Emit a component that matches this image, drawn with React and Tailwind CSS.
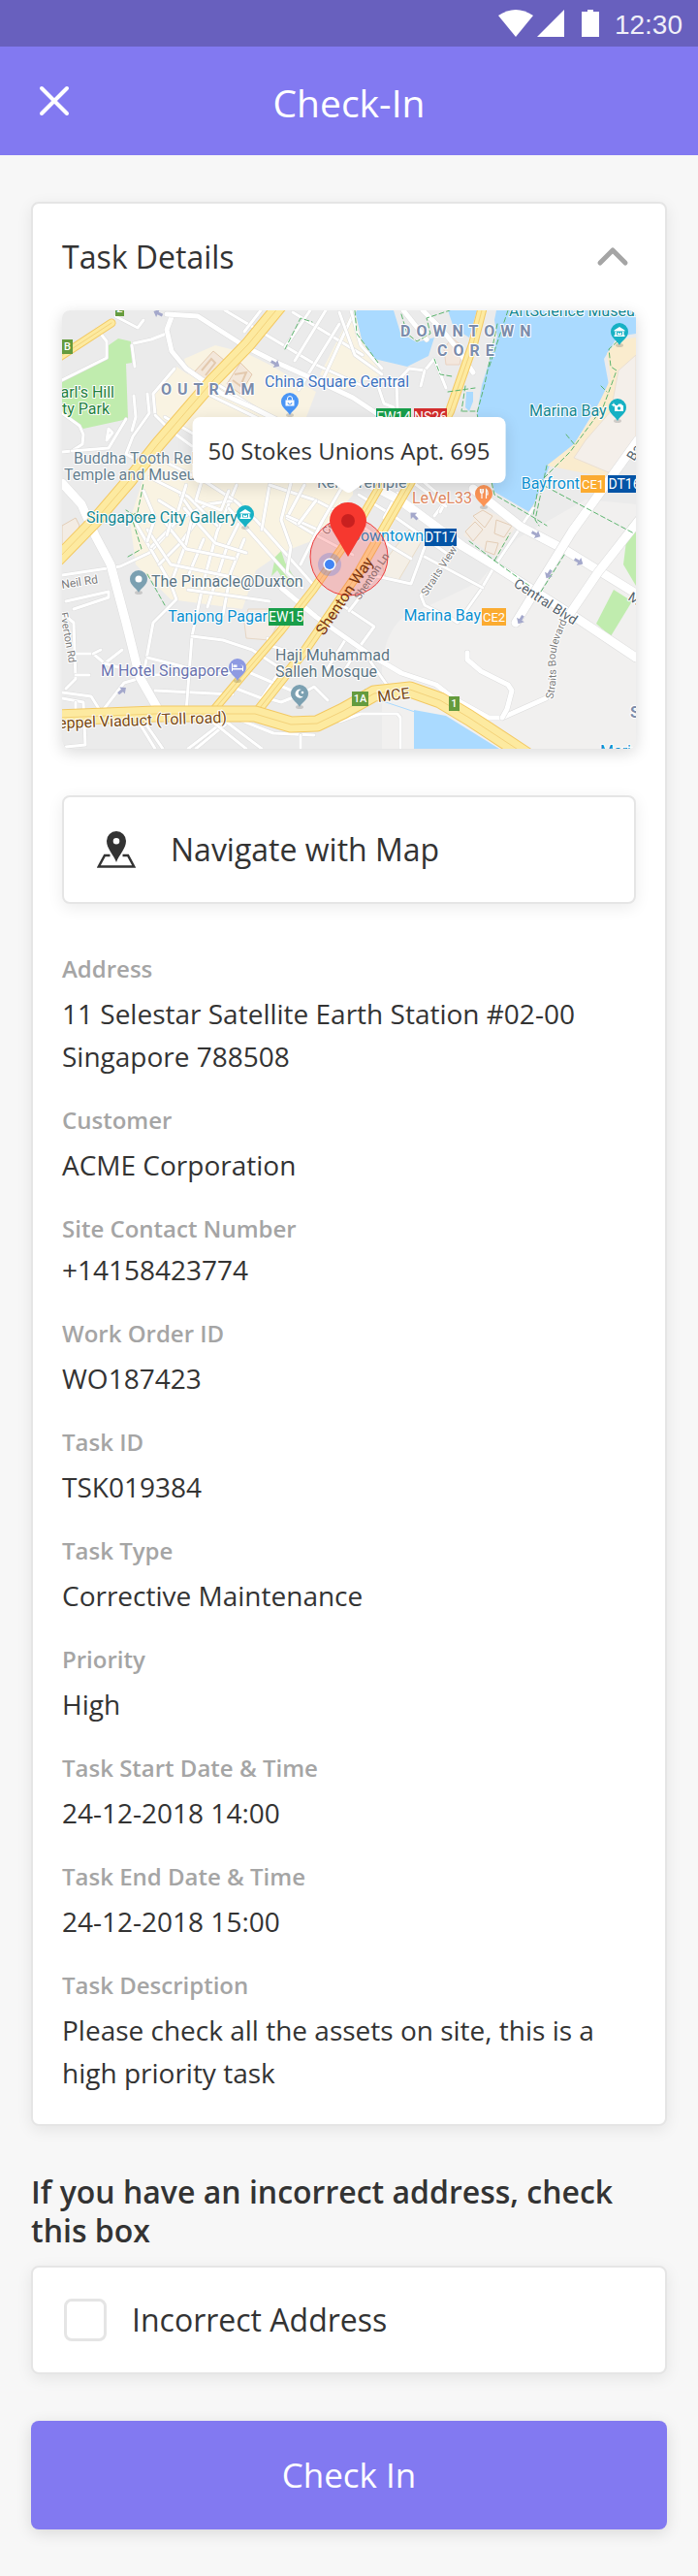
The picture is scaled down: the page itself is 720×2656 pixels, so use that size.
import React, { useState } from 'react';

const details = [
  { label: 'Address', value: '11 Selestar Satellite Earth Station #02-00 Singapore 788508' },
  { label: 'Customer', value: 'ACME Corporation' },
  { label: 'Site Contact Number', value: '+14158423774', phone: true },
  { label: 'Work Order ID', value: 'WO187423' },
  { label: 'Task ID', value: 'TSK019384' },
  { label: 'Task Type', value: 'Corrective Maintenance' },
  { label: 'Priority', value: 'High' },
  { label: 'Task Start Date & Time', value: '24-12-2018 14:00' },
  { label: 'Task End Date & Time', value: '24-12-2018 15:00' },
  { label: 'Task Description', value: 'Please check all the assets on site, this is a high priority task' },
];

// Minor streets, drawn thin
const streets = [
  'M0 72L46 49V32L36 19',
  'M55 6L78 18L84 10',
  'M74 34L92 30L110 23',
  'M72 36L75 58',
  'M0 106L18 119L22 128L21 138L10 145L0 146',
  'M10 145L48 142L66 112',
  'M46 134L52 126L48 122L46 134',
  'M88 86L90 106L73 130L66 148L80 156',
  'M74 88L76 110L72 124',
  'M96 108L94 86L116 60',
  'M96 108L112 124L134 140',
  'M106 110L140 130',
  'M168 0L262 56L310 78',
  'M205 0L188 22',
  'M238 2L310 46',
  'M256 0L230 38',
  'M272 0L240 52',
  'M286 14L244 82',
  'M302 0L266 78',
  'M286 2L302 46L330 66',
  'M298 0L308 36L330 60',
  'M310 70L345 74L358 60L374 62L384 50L396 80',
  'M345 74L346 100',
  'M326 78L332 96L342 100L342 112',
  'M374 62L370 78',
  'M146 84L240 130',
  'M160 76L214 110',
  'M0 273L60 264L90 250L116 222',
  'M4 300L48 290V296L12 308',
  'M0 312L12 322L14 380L4 390',
  'M14 354L32 354L44 364L62 350',
  'M14 376L28 376',
  'M32 354L40 350',
  'M44 364L58 368',
  'M0 394L30 398L40 414',
  'M0 400L22 404L24 448L4 450',
  'M14 404L14 420',
  'M40 415L64 384L92 376',
  'M92 376L174 374',
  'M96 392L176 396',
  'M128 414L134 336L146 280L160 228L180 180',
  'M84 376L94 322L118 298L112 282L88 240L74 216',
  'M134 336L166 340L196 350L236 376',
  'M88 358L120 366L134 370',
  'M92 244L120 216L150 200L178 196',
  'M100 262L122 240L140 216L122 190',
  'M112 282L128 240L134 214',
  'M130 274L146 236',
  'M150 306L170 244L182 220',
  'M166 314L174 270L188 236',
  'M130 288L214 300',
  'M88 226L112 262L180 276',
  'M104 216L128 246L178 256',
  'M126 204L158 240L190 250',
  'M90 172L130 192L160 222',
  'M110 158L150 178L184 200',
  'M100 196L116 206L108 232',
  'M128 180L120 206',
  'M144 176L138 196L164 206L172 186',
  'M84 186L96 214L88 238',
  'M178 196L200 216L230 250L262 286',
  'M172 204L204 240L236 276',
  'M214 180L206 226',
  'M214 180L262 196L300 216',
  'M236 178L226 216L236 244L232 270L248 286',
  'M250 180L232 214L262 232L300 252',
  'M232 212L268 228',
  'M262 196L244 220',
  'M290 180L268 218L246 262',
  'M306 190L342 212L396 250',
  'M300 216L340 244L360 256',
  'M346 188L332 214',
  'M372 176L396 196L384 212',
  'M396 196L390 208',
  'M360 176L396 202',
  'M286 302L322 326L306 348L292 370',
  'M296 310L324 274L360 282L374 244',
  'M324 236L312 264',
  'M180 390L206 400L222 376',
  'M190 372L246 396L260 388L274 402',
  'M212 338L216 346L234 352',
  'M246 396L226 404L212 400',
  'M272 372L292 340',
  'M318 362L342 396',
  'M286 424L308 416L346 416L349 420V452',
  'M130 452L164 426',
  'M138 452L172 424',
  'M150 420L190 452',
  'M164 420L206 452',
  'M80 426L96 452',
  'M86 426L104 452',
  'M178 420L218 436L260 438',
  'M246 438V452',
  'M404 246L370 294L374 304L402 318L408 322L432 288L446 264L486 204',
  'M374 254L434 286',
];

const avenues = [
  'M114 4L108 20L113 42L128 60L145 72L165 86L196 100L240 122',
  'M108 4L140 6L190 38L222 54L262 72L300 90L345 120',
  'M226 286L262 316L316 354L350 374L386 386L404 400L440 420H454L499 400',
  'M418 353V360L432 372L460 386L464 392L459 411L454 420',
  'M372 0L392 20L408 40L424 64',
  'M352 0L376 30',
];

const boulevards = [
  'M0 178L20 200L34 232L50 262L66 322L80 378L104 420',
  'M300 170L349 196L413 243L446 263L526 314L592 358',
  'M424 184L473 223L519 247L592 292',
  'M594 134L526 228L468 322',
  'M600 210L553 270L519 320',
];

const yellowRoads = [
  { d: 'M224 -4L192 35L156 72L99 138L69 176L33 218L-4 256', w: 15 },
  { d: 'M434 -4L424 35L400 104L359 178L306 270L251 350L200 415', w: 10 },
  { d: 'M338 164L302 226L259 288L226 330L190 372L154 415', w: 9 },
  { d: 'M-4 49L51 13', w: 9 },
  { d: 'M-4 420L96 416L199 416L236 427L263 426L290 413L322 395L359 391L390 402L420 420L478 458', w: 17 },
];

const greenTrails = [
  'M230 40L246 8L258 12',
  'M64 216L78 208L84 178',
  'M82 216L66 206',
  'M68 254L82 246L72 214',
  'M88 272L106 304',
  'M302 0L304 24L326 54',
  'M350 4L356 24L366 32L380 24L376 8L400 0',
  'M384 50L390 66L402 68',
  'M449 14L436 76L428 106L432 128L446 190L484 212L500 222',
  'M413 104L427 104',
  'M416 78L412 104',
  'M398 84L426 80',
  'M460 0L440 60',
  'M573 32L564 40L566 58L572 62L564 84L558 100L524 146L492 178L486 212',
  'M556 78L562 84',
  'M520 128L530 140',
  'M492 178L590 230',
  'M500 160L488 216L492 222',
  'M420 238L446 258L482 284',
  'M518 252L494 290',
  'M446 258L462 230',
];

function Street({ d, width = 3 }) {
  return (
    <>
      <path d={d} stroke="#dcdcdc" strokeWidth={width + 1} />
      <path d={d} stroke="#ffffff" strokeWidth={width} />
    </>
  );
}

function PlacePin({ x, y, color, children }) {
  return (
    <g transform={`translate(${x} ${y})`}>
      <ellipse cx="0" cy="14" rx="4" ry="2" fill="#000" opacity="0.15" />
      <path d="M0 14C-1.500 9.500 -9 7 -9 0A9 9 0 1 1 9 0C9 7 1.500 9.500 0 14Z" fill={color} />
      {children}
    </g>
  );
}

function Museum() {
  return <path d="M-5.500 -1.500L0 -5L5.500 -1.500V-.5H-5.500ZM-4.500 0H-3V4H-4.500ZM3 0H4.500V4H3ZM-5.500 3.500H5.500V5H-5.500ZM-2 3V.5L0 2L2 .5V3Z" fill="#fff" />;
}

function Badge({ x, y, w, h = 18, color, size = 14, children }) {
  return (
    <g>
      <rect x={x} y={y} width={w} height={h} fill={color} />
      <text x={x + w / 2} y={y + h / 2 + size * 0.36} fontSize={size} textAnchor="middle" fill="#fff">
        {children}
      </text>
    </g>
  );
}

function Label({ color, size = 16, children, ...rest }) {
  return (
    <text fill={color} fontSize={size} stroke="#fff" strokeWidth="2" strokeLinejoin="round" paintOrder="stroke" {...rest}>
      {children}
    </text>
  );
}

function Arrow({ x, y, angle }) {
  return <path transform={`translate(${x} ${y}) rotate(${angle})`} d="M-5 -1.500H0V-4.500L5 0L0 4.500V1.500H-5Z" fill="#a4a8cb" />;
}

function CityMap() {
  return (
    <svg
      viewBox="0 0 592 452"
      role="img"
      aria-label="Map"
      className="block w-full rounded-lg font-['Roboto',sans-serif] shadow-[0_4px_16px_rgba(0,0,0,0.15)]"
    >
      <rect width="592" height="452" fill="#ebebeb" />

      {/* land */}
      <path d="M592 200V452H330V370Q332 335 350 318L430 280L470 235L540 195Z" fill="#f1f0ef" />
      <path d="M94 108L95 86L118 58L130 66L126 50L158 36L190 44L214 56L262 84L252 110L130 126Z" fill="#f9f3e2" />
      <path d="M266 66L300 0L312 0L322 54L330 66L290 82Z" fill="#f9f3e2" />
      <path d="M88 160L140 150H300V190L262 236L226 250L200 268L186 308L112 298L76 262L70 216Z" fill="#f9f3e2" />
      <path d="M136 64L156 42L168 52L148 76ZM170 76L184 54L196 66L184 86Z" fill="#f3e7da" stroke="#e3c9ae" />
      <path d="M144 62L154 50L158 54L148 67M178 66L190 64L184 78L176 72" fill="none" stroke="#e3c9ae" strokeWidth="2" />
      <path d="M188 322L192 308H230L214 340L190 338Z" fill="#f3ece5" stroke="#e6d6c5" />
      <path d="M414 232L432 204L470 220L448 254Z" fill="#f3ece4" />
      <path d="M424 212L434 206L444 212L436 224ZM416 228L426 218L434 226L424 238ZM448 216L464 222L456 234L446 230ZM438 238L450 240L446 252L436 248Z" fill="#f3ece4" stroke="#e3cdb6" />
      <path d="M330 262L358 226L372 236L346 280L334 276Z" fill="#f4efe6" stroke="#e9dcc8" />
      <path d="M394 40L402 28L414 38L410 56L396 56Z" fill="#f3e7dd" stroke="#ead3c2" />
      <path d="M0 222L14 214L18 222L14 232L0 242Z" fill="#f3ece4" stroke="#e3cdb6" />

      {/* parks */}
      <path d="M0 72L30 57L46 48L48 36L58 29L71 32L72 54L66 55L68 112L22 122L0 104Z" fill="#c0ecae" />
      <path d="M226 248L230 260L240 276L232 284L222 268L216 274L220 254Z" fill="#c0ecae" />
      <path d="M569 288L588 300L566 336L551 323Z" fill="#c0ecae" />
      <path d="M592 214L584 222L579 262L592 284Z" fill="#c0ecae" />

      {/* water */}
      <path d="M448 0L446 10L449 27L433 77L428 107L432 123L446 187L482 208L488 197L503 160L529 137L553 97L564 77L559 50L573 27L592 24V0Z" fill="#aadaff" />
      <path d="M302 0L309 30L322 50L356 58L378 47L384 28L366 33L349 23L342 0Z" fill="#aadaff" />
      <path d="M398 0H428L420 28L404 18Z" fill="#aadaff" />
      <path d="M417 84L424 84V94L420 104L416 100Z" fill="#aadaff" />
      <path d="M363 412L396 418L451 452H363Z" fill="#aadaff" />
      <path d="M312 390L322 400L364 414" fill="none" stroke="#aadaff" />
      <path d="M592 28L576 30L562 44L566 70L550 104L528 138L500 160L560 172L592 130Z" fill="#faecce" />
      <path d="M592 46L574 62L566 104L540 134L528 152L566 168L592 134Z" fill="#f4efea" stroke="#eadfd2" />

      {/* roads */}
      <g fill="none" strokeLinejoin="round" strokeLinecap="round">
        {streets.map((d) => (
          <Street key={d} d={d} />
        ))}
        {avenues.map((d) => (
          <Street key={d} d={d} width={5} />
        ))}
        {boulevards.map((d) => (
          <Street key={d} d={d} width={9} />
        ))}
        {yellowRoads.map((road) => (
          <g key={road.d}>
            <path d={road.d} stroke="#f3c963" strokeWidth={road.w} />
            <path d={road.d} stroke="#fdeaa0" strokeWidth={road.w - 2} />
            <path d={road.d} stroke="#f3d27b" strokeWidth="1" />
          </g>
        ))}
        <g stroke="#5db56f" strokeWidth="1" strokeDasharray="5 3">
          {greenTrails.map((d) => (
            <path key={d} d={d} />
          ))}
        </g>
      </g>

      <Arrow x={99} y={3} angle={205} />
      <Arrow x={220} y={55} angle={30} />
      <Arrow x={363} y={212} angle={225} />
      <Arrow x={489} y={231} angle={28} />
      <Arrow x={533} y={259} angle={30} />
      <Arrow x={502} y={272} angle={120} />
      <Arrow x={473} y={319} angle={120} />
      <Arrow x={62} y={392} angle={-38} />

      {/* districts */}
      <g fontWeight="700">
        <Label x={102} y={87} color="#7b8cab" className="tracking-[6px]">OUTRAM</Label>
        <Label x={349} y={27} color="#7b8cab" className="tracking-[6px]">DOWNTOWN</Label>
        <Label x={387} y={47} color="#7b8cab" className="tracking-[6px]">CORE</Label>
        <Label x={586} y={420} color="#7b8cab">S</Label>
      </g>

      {/* places */}
      <Label x={54} y={90} textAnchor="end" color="#1f8040">Pearl's Hill</Label>
      <Label x={49} y={107} textAnchor="end" color="#1f8040">City Park</Label>
      <Label x={209} y={79} color="#3f74bf">China Square Central</Label>
      <Label x={12} y={158} color="#66808f">Buddha Tooth Relic</Label>
      <Label x={2} y={175} color="#66808f">Temple and Museum</Label>
      <Label x={25} y={219} color="#128792">Singapore City Gallery</Label>
      <Label x={461} y={6} color="#128792">ArtScience Museum</Label>
      <Label x={482} y={109} color="#128792">Marina Bay</Label>
      <Label x={263} y={183} color="#66808f">Keng Temple</Label>
      <Label x={361} y={199} color="#de8760">LeVeL33</Label>
      <Label x={92} y={285} color="#5b7482">The Pinnacle@Duxton</Label>
      <Label x={40} y={377} color="#6972ae">M Hotel Singapore</Label>
      <Label x={220} y={361} color="#5b7482">Haji Muhammad</Label>
      <Label x={220} y={378} color="#5b7482">Salleh Mosque</Label>

      {/* stations */}
      <Label x={212} y={321} textAnchor="end" color="#0a8fd0">Tanjong Pagar</Label>
      <Label x={373} y={238} textAnchor="end" color="#0a8fd0">Downtown</Label>
      <Label x={432} y={320} textAnchor="end" color="#0a8fd0">Marina Bay</Label>
      <Label x={534} y={184} textAnchor="end" color="#0a8fd0">Bayfront</Label>
      <Label x={555} y={460} color="#0a8fd0">Marina</Label>
      <Badge x={324} y={101} w={36} color="#189e4a">EW14</Badge>
      <Badge x={363} y={101} w={34} color="#d42e2e">NS26</Badge>
      <Badge x={213} y={307} w={36} color="#189e4a">EW15</Badge>
      <Badge x={374} y={225} w={33} color="#0354a6">DT17</Badge>
      <Badge x={535} y={170} w={25} size={13} color="#fbab30">CE1</Badge>
      <Badge x={563} y={170} w={34} color="#0354a6">DT16</Badge>
      <Badge x={433} y={307} w={25} size={13} color="#fbab30">CE2</Badge>
      <g fontWeight="500">
        <Badge x={0} y={30} w={11} h={15} size={11} color="#659b3d">B</Badge>
        <Badge x={55} y={-9} w={9} h={15} size={11} color="#659b3d">2</Badge>
        <Badge x={299} y={393} w={17} h={15} size={11} color="#659b3d">1A</Badge>
        <Badge x={399} y={398} w={11} h={15} size={11} color="#659b3d">1</Badge>
      </g>

      {/* road names */}
      <Label transform="translate(170 425) rotate(-2)" textAnchor="end" color="#7a4a12">Keppel Viaduct (Toll road)</Label>
      <Label transform="translate(326 404) rotate(-7)" color="#7a4a12">MCE</Label>
      <Label transform="translate(0 287) rotate(-9)" size={12} color="#7b7b7b">Neil Rd</Label>
      <Label transform="translate(-2 312) rotate(80)" size={11} color="#7b7b7b">Everton Rd</Label>
      <Label transform="translate(274 232) rotate(-56)" size={11} color="#7b7b7b">Cecil St</Label>
      <Label transform="translate(376 295) rotate(-57)" size={11} color="#7b7b7b">Straits View</Label>
      <Label transform="translate(465 284) rotate(33)" size={14} color="#54616a">Central Blvd</Label>
      <Label transform="translate(583 298) rotate(32)" size={14} color="#54616a">Marina Blvd</Label>
      <Label transform="translate(590 156) rotate(-58)" size={14} color="#54616a">Bayfront Ave</Label>
      <path id="straits" d="M506 401Q511 384 509 362Q508 346 524 314" fill="none" />
      <Label size={11} color="#7b7b7b">
        <textPath href="#straits">Straits Boulevard</textPath>
      </Label>

      {/* place pins */}
      <PlacePin x={235} y={94} color="#4a95f5">
        <path d="M-4.500 -1.500H4.500V4.500H-4.500Z" fill="#fff" />
        <path d="M-2.500 -1.500V-3A2.500 2.500 0 0 1 2.500 -3V-1.500" fill="none" stroke="#fff" />
        <path d="M-2 1A2 2 0 0 0 2 1" fill="none" stroke="#4a95f5" />
      </PlacePin>
      <PlacePin x={189} y={210} color="#17b1c4"><Museum /></PlacePin>
      <PlacePin x={575} y={22} color="#17b1c4"><Museum /></PlacePin>
      <PlacePin x={573} y={100} color="#17b1c4">
        <path d="M-3 -2H0L1 -3.500H4L5 -2H6V4H-3Z" fill="#fff" />
        <circle cx="1.500" cy="1" r="1.700" fill="#17b1c4" />
        <path d="M-4 -5L-3.300 -3.300L-1.500 -2.500L-3.300 -1.700L-4 0L-4.700 -1.700L-6.500 -2.500L-4.700 -3.300Z" fill="#fff" />
      </PlacePin>
      <PlacePin x={435} y={189} color="#fb9456">
        <path d="M-3.500 -5V-2A1.500 1.500 0 0 0 -.5 -2V-5M-2 -5V5M2.500 5V-4.500Q4.500 -3 4 1H2.500" fill="none" stroke="#fff" strokeWidth="1.200" />
      </PlacePin>
      <PlacePin x={79} y={277} color="#7ba0b1"><circle r="3.500" fill="#fff" /></PlacePin>
      <PlacePin x={181} y={368} color="#8e9ae2">
        <path d="M-6 -4H-5V1H5V-1Q5 -2.500 3 -2.500H-.5V0H-4.500V-2.500H-1V-2.500H4Q6 -2.500 6 0V4H5V2.500H-5V4H-6Z" fill="#fff" />
      </PlacePin>
      <PlacePin x={245} y={395} color="#7ba0b1">
        <path d="M2 -4A4.500 4.500 0 1 0 4 2.500A3.500 3.500 0 1 1 2 -4Z" fill="#fff" />
        <circle cx="3" cy="-1" r="1.300" fill="#fff" />
      </PlacePin>

      {/* current position and task location */}
      <circle cx="296" cy="254" r="40" fill="#ff3b3b" fillOpacity="0.25" stroke="#ee3a3a" />
      <Label transform="translate(307 299) rotate(-56)" size={11} color="#8b6a6a" strokeOpacity="0">Shenton Ln</Label>
      <text transform="translate(270 336) rotate(-56)" fontSize="16" fill="#7a3410">Shenton Way</text>
      <circle cx="276" cy="262" r="12" fill="#5a7be0" fillOpacity="0.3" />
      <circle cx="276" cy="262" r="6.500" fill="#fff" />
      <circle cx="276" cy="262" r="5" fill="#4285f4" />
      <path d="M295 254L279 227Q276 222 276 217A19 19 0 0 1 314 217Q314 222 311 227Z" fill="#f6382f" />
      <circle cx="295" cy="217" r="7" fill="#c9201f" />
    </svg>
  );
}

function StatusBar() {
  return (
    <div className="flex h-12 items-center justify-end bg-[#6860be] pr-4 text-white">
      <svg viewBox="0 0 104 28" className="h-7 w-[104px] fill-current" aria-hidden="true">
        <path d="M0 6Q18 -6 36 6L18 28Z" />
        <path d="M68 0V28H40Z" />
        <path d="M86 2H92V0H98V2H104V28H86Z" />
      </svg>
      <span className="pt-1 pl-4 font-['Liberation_Sans',sans-serif] text-[28px] leading-8 opacity-90">12:30</span>
    </div>
  );
}

const App = () => {
  const [open, setOpen] = useState(true);
  const [incorrect, setIncorrect] = useState(false);

  return (
    <div className="min-h-screen bg-[#f7f7f7] pb-12 font-['Open_Sans',sans-serif] text-[#333333]">
      <StatusBar />
      <header className="grid h-28 grid-cols-[1fr_auto_1fr] items-center bg-[#8279f1] px-10 text-white">
        <button type="button" aria-label="Close" className="justify-self-start">
          <svg viewBox="0 0 32 32" className="size-8" aria-hidden="true">
            <path d="M3 3L29 29M29 3L3 29" stroke="currentColor" strokeWidth="4" strokeLinecap="round" />
          </svg>
        </button>
        <h1 className="pt-1 text-[39px] leading-[56px]">Check-In</h1>
      </header>

      <main className="px-8 pt-12">
        <section className="rounded-lg border-2 border-[#e5e5e5] bg-white px-[30px] pb-[31px] shadow-[0_4px_16px_rgba(0,0,0,0.08)]">
          <h2>
            <button
              type="button"
              aria-expanded={open}
              onClick={() => setOpen(!open)}
              className="flex h-[110px] w-full items-center justify-between pr-1 text-[32px]"
            >
              Task Details
              <svg viewBox="0 0 40 24" className="h-6 w-10" aria-hidden="true">
                <path d="M7 18L20 5L33 18" fill="none" stroke="#a5a5a5" strokeWidth="5" strokeLinecap="round" strokeLinejoin="round" />
              </svg>
            </button>
          </h2>

          {open && (
            <>
              <div className="relative">
                <CityMap />
                <div className="absolute top-[110px] left-1/2 -translate-x-1/2 rounded-lg bg-white px-4 pt-[17px] pb-[15px] text-2xl leading-9 whitespace-nowrap shadow-[0_4px_16px_rgba(0,0,0,0.12)]">
                  50 Stokes Unions Apt. 695
                  <svg viewBox="0 0 32 10" className="absolute top-full left-1/2 h-2.5 w-8 -translate-x-1/2 fill-white" aria-hidden="true">
                    <path d="M0 0H32L19 9Q16 11 13 9Z" />
                  </svg>
                </div>
              </div>

              <button
                type="button"
                className="mt-12 flex h-28 w-full items-center gap-9 rounded-lg border-2 border-[#e5e5e5] bg-white px-[34px] text-[32px] shadow-[0_4px_16px_rgba(0,0,0,0.08)]"
              >
                <svg viewBox="0 0 40 38" className="h-[38px] w-10" aria-hidden="true">
                  <path
                    d="M20 0A10 10 0 0 0 10 10C10 18 17 24 20 32C23 24 30 18 30 10A10 10 0 0 0 20 0ZM20 7A3.300 3.300 0 1 1 20 13.600A3.300 3.300 0 0 1 20 7Z"
                    fill="#333333"
                  />
                  <path d="M13.500 25H8L1.800 36.500H38.200L32 25H26.500" fill="none" stroke="#333333" strokeWidth="2.500" />
                </svg>
                <span>Navigate with Map</span>
              </button>

              <dl className="mt-[51px] flex flex-col gap-7">
                {details.map((item) => (
                  <div key={item.label} className={item.phone ? 'flex flex-col gap-1' : 'flex flex-col gap-2'}>
                    <dt className="text-2xl leading-8 font-semibold text-[#a5a5a5]">{item.label}</dt>
                    <dd className="text-[28px] leading-11">
                      {item.phone ? <a href={`tel:${item.value}`}>{item.value}</a> : item.value}
                    </dd>
                  </div>
                ))}
              </dl>
            </>
          )}
        </section>

        <h2 className="mt-12 text-[32px] leading-10 font-semibold">
          If you have an incorrect address, check this box
        </h2>
        <label className="mt-4 flex h-28 items-center gap-[26px] rounded-lg border-2 border-[#e5e5e5] bg-white px-8 text-[32px] shadow-[0_4px_16px_rgba(0,0,0,0.08)]">
          <input
            type="checkbox"
            checked={incorrect}
            onChange={(e) => setIncorrect(e.target.checked)}
            className="size-11 appearance-none rounded-lg border-3 border-[#e5e5e5] bg-white checked:bg-[#8279f1]"
          />
          Incorrect Address
        </label>
        <button
          type="submit"
          className="mt-12 h-28 w-full rounded-lg bg-[#8279f1] text-[35px] text-white shadow-[0_4px_16px_rgba(0,0,0,0.12)]"
        >
          Check In
        </button>
      </main>
    </div>
  );
};

export default App;
